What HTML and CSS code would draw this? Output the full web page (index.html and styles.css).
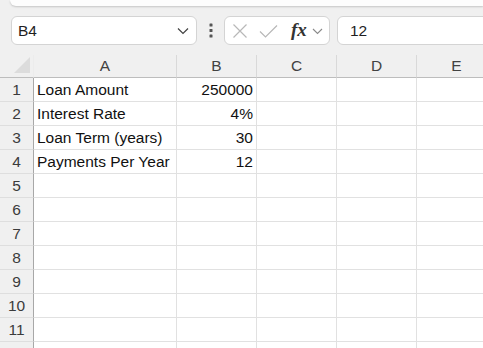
FILE: index.html
```html
<!DOCTYPE html>
<html lang="en">
<head>
    <meta charset="UTF-8">
    <title>Loan Sheet</title>
    <link rel="stylesheet" href="styles.css">
</head>
<body>
    <div class="ribbon"></div>

    <div class="formula-bar">
        <div class="name-box">
            <span>B4</span>
            <svg class="chevron" width="12" height="8" viewBox="0 0 12 8"><path d="M1 1.5 L6 6.5 L11 1.5" fill="none" stroke="#424242" stroke-width="1.2"/></svg>
        </div>
        <div class="more">
            <svg width="4" height="15" viewBox="0 0 4 15"><rect x="0.5" y="0.5" width="3" height="3" rx="0.6" fill="#555"/><rect x="0.5" y="6" width="3" height="3" rx="0.6" fill="#555"/><rect x="0.5" y="11.5" width="3" height="3" rx="0.6" fill="#555"/></svg>
        </div>
        <div class="fx-group">
            <svg class="btn-x" width="16" height="16" viewBox="0 0 16 16"><path d="M1.5 1.5 L14.5 14.5 M14.5 1.5 L1.5 14.5" stroke="#b8b8b8" stroke-width="1.2"/></svg>
            <svg class="btn-ok" width="19" height="14" viewBox="0 0 19 14"><path d="M1 7.5 L6.5 13 L18 1.5" fill="none" stroke="#b8b8b8" stroke-width="1.2"/></svg>
            <span class="fx">fx</span>
            <svg class="fx-chevron" width="11" height="7" viewBox="0 0 11 7"><path d="M1 1 L5.5 5.5 L10 1" fill="none" stroke="#8a8a8a" stroke-width="1.1"/></svg>
        </div>
        <div class="formula-input">12</div>
    </div>

    <div class="sheet" id="sheet"></div>

    <script>
        // Sheet data: label in column A, value in column B
        const data = [
            ['Loan Amount', '250000'],
            ['Interest Rate', '4%'],
            ['Loan Term (years)', '30'],
            ['Payments Per Year', '12']
        ];
        const columns = ['A', 'B', 'C', 'D', 'E'];
        const sheet = document.getElementById('sheet');

        function addCell(cls, text) {
            const cell = document.createElement('div');
            cell.className = cls;
            cell.textContent = text || '';
            sheet.appendChild(cell);
            return cell;
        }

        // Header row
        const corner = addCell('corner');
        corner.innerHTML = '<svg width="16" height="16" viewBox="0 0 16 16"><path d="M16 0 L16 16 L0 16 Z" fill="#dcdcdc"/></svg>';
        columns.forEach(c => addCell('col-head', c));

        // Rows 1 to 11, plus the edge of row 12 (number hidden below the fold)
        for (let r = 1; r <= 12; r++) {
            addCell('row-head', r < 12 ? r : '');
            const row = data[r - 1] || [];
            addCell('cell', row[0]);
            addCell('cell num', row[1]);
            addCell('cell');
            addCell('cell');
            addCell('cell');
        }
    </script>
</body>
</html>
```

FILE: styles.css
```css
body {
    margin: 0;
    background-color: #f0f0f0;
    font-family: "Liberation Sans", Arial, sans-serif;
    color: #1f1f1f;
    overflow: hidden;
}

.ribbon {
    height: 6px;
    margin-left: 10px;
    background-color: #fdfdfd;
    border-radius: 0 0 0 8px;
    box-shadow: 0 1px 2px rgba(0, 0, 0, 0.18);
}

/* Formula bar */
.formula-bar {
    display: flex;
    align-items: center;
    height: 29px;
    margin-top: 10px;
    padding-left: 11px;
}

.name-box,
.fx-group,
.formula-input {
    box-sizing: border-box;
    height: 29px;
    background-color: white;
    border: 1px solid #d4d4d4;
    border-radius: 6px;
    display: flex;
    align-items: center;
}

.name-box {
    width: 186px;
    padding: 0 6px;
    justify-content: space-between;
    font-size: 15.5px;
}

.chevron {
    margin-right: 1px;
}

.more {
    width: 27px;
    display: flex;
    justify-content: center;
}

.fx-group {
    width: 106px;
    padding-left: 7px;
}

.btn-x {
    margin-right: 11px;
}

.btn-ok {
    margin-right: 13px;
}

.fx {
    font-family: "Liberation Serif", "Times New Roman", serif;
    font-style: italic;
    font-weight: bold;
    font-size: 19px;
    color: #333;
    margin-right: 5px;
    margin-top: -2px;
}

.fx-chevron {
    margin-top: 2px;
}

.formula-input {
    flex: 1;
    margin-left: 7px;
    margin-right: -10px;
    padding-left: 12px;
    font-size: 15.5px;
}

/* Grid */
.sheet {
    display: grid;
    grid-template-columns: 34px 143px 80px 80px 80px 80px;
    grid-auto-rows: 24px;
    grid-template-rows: 23px;
    margin-top: 10px;
    font-size: 15.5px;
}

.corner,
.col-head,
.row-head,
.cell {
    box-sizing: border-box;
    display: flex;
    align-items: center;
    white-space: nowrap;
    overflow: hidden;
}

.corner {
    border-bottom: 1px solid #bdbdbd;
    border-right: 1px solid #ececec;
    justify-content: flex-end;
    align-items: flex-end;
    padding: 0 3px 4px 0;
}

.col-head {
    justify-content: center;
    color: #424242;
    border-right: 1px solid #d9d9d9;
    border-bottom: 1px solid #bdbdbd;
}

.row-head {
    justify-content: center;
    color: #3b3b3b;
    border-right: 1px solid #a8a8a8;
    border-bottom: 1px solid #dedede;
}

.cell {
    background-color: white;
    border-right: 1px solid #e1e1e1;
    border-bottom: 1px solid #e1e1e1;
    padding: 0 3px;
    color: #111;
}

.num {
    justify-content: flex-end;
}
```
